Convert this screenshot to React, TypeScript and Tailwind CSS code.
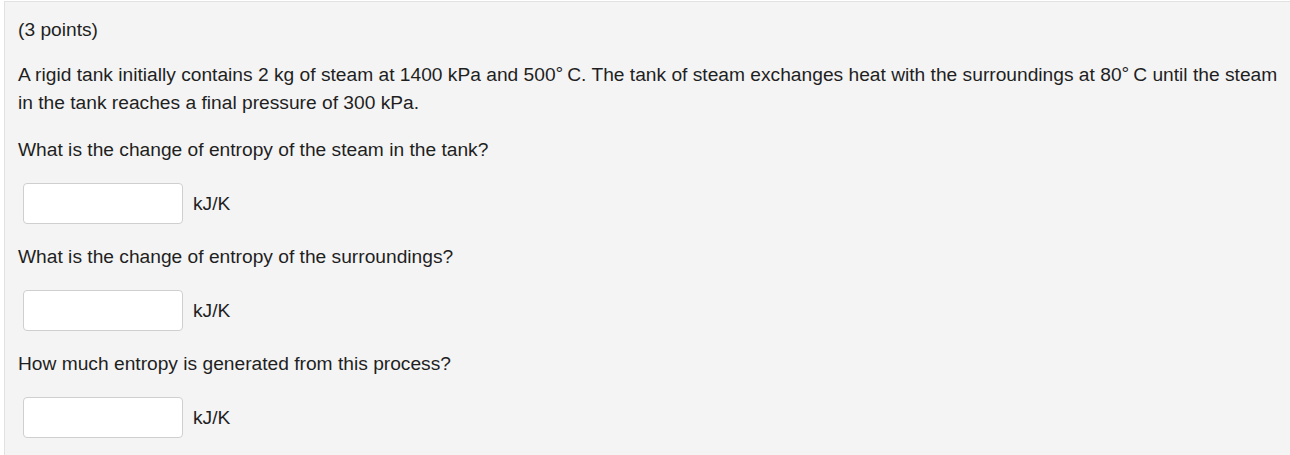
import React from "react"

function Deg() {
  return <span className="relative -top-[1px] mr-[4px]">°</span>
}

function AnswerRow() {
  return (
    <div className="flex items-center gap-[10px] mt-[19px] ml-[5px]">
      <input
        type="text"
        className="w-[160px] h-[41px] bg-white border border-[#cfcfcf] rounded-[4px] outline-none"
      />
      <span>kJ/K</span>
    </div>
  )
}

export default function App() {
  return (
    <div className="w-[1290px] h-[455px] bg-white overflow-hidden">
      <div
        className="mt-px ml-[4px] h-[460px] bg-[#f4f4f4] border-t border-l border-[#e2e2e2] pl-[13px] pt-[14px] text-[19.2px] leading-[28px] text-[#1f1f1f]"
        style={{ fontFamily: '"Liberation Sans", Arial, sans-serif' }}
      >
        <p>(3 points)</p>

        <p className="mt-[17px]">
          A rigid tank initially contains 2 kg of steam at 1400 kPa and 500<Deg />C. The tank of steam exchanges heat with the surroundings at 80<Deg />C until the steam
          <br />
          in the tank reaches a final pressure of 300 kPa.
        </p>

        <p className="mt-[19px]">What is the change of entropy of the steam in the tank?</p>
        <AnswerRow />

        <p className="mt-[19px]">What is the change of entropy of the surroundings?</p>
        <AnswerRow />

        <p className="mt-[19px]">How much entropy is generated from this process?</p>
        <AnswerRow />
      </div>
    </div>
  )
}
